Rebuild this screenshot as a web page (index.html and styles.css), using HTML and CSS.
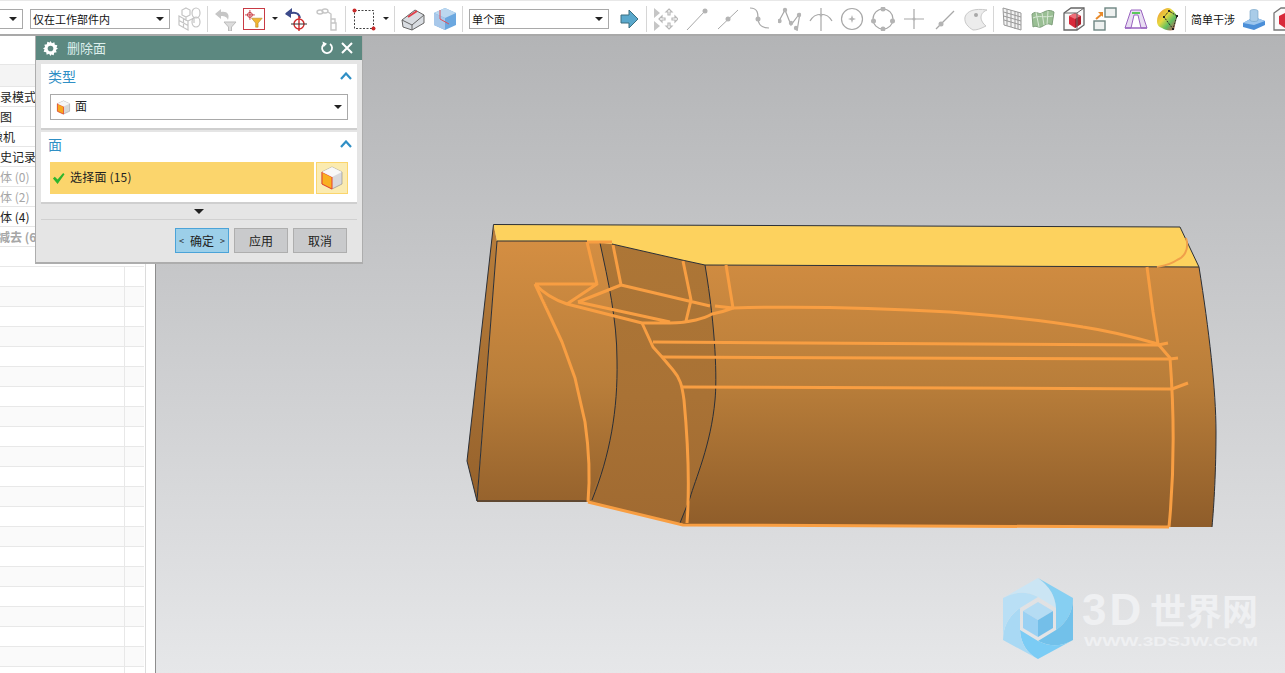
FILE: index.html
```html
<!DOCTYPE html>
<html lang="zh">
<head>
<meta charset="utf-8">
<title>删除面</title>
<link rel="stylesheet" href="styles.css">
</head>
<body>
<div class="app">
  <header class="toolbar">
    <div class="select select-a"><span class="tri"></span></div>
    <div class="select select-b"><span>仅在工作部件内</span><span class="tri"></span></div>
    <svg class="ico m8" viewBox="0 0 24 24"><g fill="none" stroke="#c4c4c4" stroke-width="1.2"><path d="M1 9l9 5v9l-9-5zM10 14l6-3v5M1 13.5l9 5M5.5 11.5v9M8 1l4 2v5l-4 2-4-2V3zM8 10v4"/><ellipse cx="18" cy="6" rx="4" ry="5"/><ellipse cx="18" cy="15" rx="4" ry="5"/></g></svg>
    <i class="sep"></i>
    <svg class="ico" viewBox="0 0 24 24"><path d="M2 7l6-5v3c6-1 9 2 7 8-1-3-3-4-7-4v3z" fill="#c6c6c6"/><path d="M11 15h12l-4.500 5v4h-3v-4z" fill="#dcdcdc" stroke="#bbb"/></svg>
    <div class="boxed m6">
      <svg class="ico-in" viewBox="0 0 22 22"><g fill="none" stroke="#c0202a" stroke-width="1"><circle cx="6" cy="6" r="3"/><path d="M0 6h12M6 0v12"/></g><path d="M8 10h13l-5 6v5h-3v-5z" fill="#f2b632" stroke="#a87a16" stroke-width=".6"/></svg>
    </div>
    <span class="mini-tri m7"></span>
    <svg class="ico m5" viewBox="0 0 24 24"><path d="M2 7l5-4v3c5-1 8 0 9 5" fill="none" stroke="#3c4a8a" stroke-width="2"/><path d="M1 7l6 4V3z" fill="#3c4a8a"/><g fill="none" stroke="#d02a2a" stroke-width="1.4"><circle cx="15" cy="17" r="5"/><path d="M15 9v15"/></g><path d="M7 17h16" stroke="#333"/></svg>
    <svg class="ico m8" viewBox="0 0 24 24"><g fill="none" stroke="#c6c6c6" stroke-width="1.4"><ellipse cx="4" cy="5" rx="3" ry="2"/><ellipse cx="9" cy="4" rx="3" ry="2"/><path d="M12 5l3 2v5h4v4h-4v-4M15 16h5v7h-5z"/></g></svg>
    <i class="sep"></i>
    <svg class="ico m1" viewBox="0 0 24 24"><rect x="2.500" y="3.500" width="19" height="18" fill="none" stroke="#444" stroke-dasharray="2 1.500"/><circle cx="2.500" cy="3.500" r="2" fill="#c82a2a"/><circle cx="21.500" cy="21.500" r="2" fill="#c82a2a"/></svg>
    <span class="mini-tri m7"></span>
    <i class="sep m4"></i>
    <svg class="ico m1" viewBox="0 0 24 24"><path d="M1 13L14 3l9 5v8L11 23l-9-3z" fill="#d9dde2" stroke="#666"/><path d="M1 13l10 5v5M11 18l12-10" fill="none" stroke="#666"/><path d="M7 10l9-6" stroke="#e0404a" stroke-width="2"/></svg>
    <svg class="ico m8" viewBox="0 0 24 24"><path d="M12 1l11 5v12l-11 5-11-5V6z" fill="#6ba8e0"/><path d="M1 6l11 5 11-5-11-5z" fill="#bcd8f0"/><path d="M1 6l11 5v12L1 18z" fill="#a8c8ea"/><path d="M7 3v9l9 5" fill="none" stroke="#e0505a"/></svg>
    <i class="sep"></i>
    <div class="select select-c m1"><span>单个面</span><span class="tri"></span></div>
    <svg class="ico m8" viewBox="0 0 24 24"><path d="M4 8h8V3l9 9-9 9v-5H4z" fill="#5aa8cc" stroke="#3b6f80"/></svg>
    <i class="sep"></i>
    <div class="group m2">
      <svg class="ico" viewBox="0 0 24 24"><path d="M0 1l6 5-6 5zM0 14l6 5-6 5z" fill="#c6c6c6"/><g fill="none" stroke="#b8b8b8" stroke-width="1.200"><path d="M15 2l3 3h-2v3h-2V5h-2zM15 22l3-3h-2v-3h-2v3h-2zM5 12l3-3v2h3v2H8v2zM24 12l-3-3v2h-3v2h3v2z"/></g></svg>
      <svg class="ico" viewBox="0 0 24 24"><path d="M2 23L20 4" stroke="#a8a8a8" fill="none"/><circle cx="20" cy="4" r="2.500" fill="#b4b4b4"/></svg>
      <svg class="ico" viewBox="0 0 24 24"><path d="M2 22L22 3" stroke="#a8a8a8" fill="none"/><circle cx="12" cy="12" r="2.500" fill="#b4b4b4"/></svg>
      <svg class="ico" viewBox="0 0 24 24"><path d="M3 1c8 0 8 6 8 10 0 8 6 10 11 10" stroke="#a8a8a8" fill="none" stroke-width="1.200"/><circle cx="11" cy="12" r="2.500" fill="#b4b4b4"/></svg>
      <svg class="ico" viewBox="0 0 24 24"><path d="M1 14L7 3l6 15 9-12-3 18" stroke="#a8a8a8" fill="none" stroke-width="1.200"/><g fill="#b4b4b4"><circle cx="7" cy="3" r="2.200"/><circle cx="1.500" cy="14" r="2.200"/><circle cx="13" cy="16" r="2.200"/><circle cx="21" cy="8" r="2.200"/><circle cx="18" cy="21" r="2.200"/></g></svg>
      <svg class="ico" viewBox="0 0 24 24"><path d="M1 14C6 5 18 5 23 14M12 1v23" stroke="#a8a8a8" fill="none" stroke-width="1.200"/><circle cx="12" cy="8" r="1.500" fill="#b4b4b4"/></svg>
      <svg class="ico" viewBox="0 0 24 24"><circle cx="12" cy="12" r="10.500" stroke="#a8a8a8" fill="none" stroke-width="1.200"/><path d="M12 8l1 3 3 1-3 1-1 3-1-3-3-1 3-1z" fill="#b4b4b4"/></svg>
      <svg class="ico" viewBox="0 0 24 24"><circle cx="12" cy="12" r="10" stroke="#a8a8a8" fill="none" stroke-width="1.200"/><g fill="#b4b4b4"><circle cx="12" cy="2" r="2.500"/><circle cx="2.500" cy="14" r="2.500"/><circle cx="21.500" cy="14" r="2.500"/><circle cx="12" cy="22" r="2.500"/></g></svg>
      <svg class="ico" viewBox="0 0 24 24"><path d="M2 12h20M12 2v20" stroke="#a8a8a8" fill="none" stroke-width="1.200"/><circle cx="12" cy="12" r="1.500" fill="#b4b4b4"/></svg>
      <svg class="ico" viewBox="0 0 24 24"><path d="M3 22L21 4" stroke="#a8a8a8" fill="none" stroke-width="1.200"/><circle cx="8" cy="17" r="2.500" fill="#b4b4b4"/></svg>
      <svg class="ico" viewBox="0 0 24 24"><path d="M1 10C3 4 10 1 23 3c-5 2-6 5-6 8 0 2 2 6 5 8-6 3-9 4-13 4C4 20 0 16 1 10z" fill="#ececec" stroke="#c8c8c8"/><circle cx="12" cy="8" r="2" fill="#a8a8a8"/></svg>
    </div>
    <i class="sep"></i>
    <div class="group m1">
      <svg class="ico" viewBox="0 0 24 24"><path d="M3 1l18 5v17L4 18z" fill="#f2f2f2" stroke="#999"/><path d="M3.500 5l17.500 5M3.500 9l17.500 5M4 13l17 5M7 2v17M11 3v17M15 4v18M18 5v17" stroke="#999" fill="none"/></svg>
      <svg class="ico" viewBox="0 0 24 24"><path d="M1 7c5-4 6 1 10-1s7-4 12-1l-2 13c-5-3-8 1-11 2s-5-2-8 0z" fill="#9abf94" stroke="#7f9f7c"/><path d="M5 5l3 15M11 6l2 12M17 4l-1 14M2 11c6-3 10 0 20-2" stroke="#d9e8d6" fill="none"/></svg>
      <svg class="ico" viewBox="0 0 24 24"><path d="M2 6l7-5h13v17l-7 5H2z" fill="#fafafa" stroke="#666" stroke-width="1.300"/><path d="M7 9l6-3 6 3v8l-6 4-6-4z" fill="#d8293a"/><path d="M7 9l6 3 6-3-6-3z" fill="#ef6e78"/><path d="M13 12v9l6-4V9z" fill="#a91f2c"/><path d="M2 6h13v17M15 6l7-5" stroke="#666" fill="none"/></svg>
      <svg class="ico" viewBox="0 0 24 24"><rect x="12" y="1" width="11" height="9" fill="#eef1f0" stroke="#6e8582" stroke-width="1.400"/><rect x="1" y="14" width="11" height="9" fill="#eef1f0" stroke="#6e8582" stroke-width="1.400"/><path d="M3 12l6-5" stroke="#e88a2a" stroke-width="2"/><path d="M5 5h5v5z" fill="#e88a2a"/></svg>
      <svg class="ico" viewBox="0 0 24 24"><path d="M1 21L7 3h10l6 18h-6L14 8h-4L7 21z" fill="#e8ddf2" stroke="#9a64c0"/><path d="M8 6h8" stroke="#5ac85a" stroke-width="2"/><path d="M1 21h22" stroke="#9a64c0" stroke-width="1.500"/></svg>
      <svg class="ico" viewBox="0 0 24 24"><defs><linearGradient id="heat" x1="0" y1="0" x2="1" y2="1"><stop offset="0" stop-color="#f08a30"/><stop offset=".4" stop-color="#e8d840"/><stop offset=".65" stop-color="#60c060"/><stop offset="1" stop-color="#d84050"/></linearGradient></defs><path d="M2 14C2 6 9 1 13 1c3 0 6 3 9 8l-3 14c-5 1-9 0-12-2-3-1-5-3-5-7z" fill="url(#heat)"/><path d="M9 10l5-6 8 5-4 13z" fill="none" stroke="#222" stroke-dasharray="2 1"/><g fill="#222"><rect x="8" y="9" width="2" height="2"/><rect x="21" y="8" width="2" height="2"/><rect x="17" y="21" width="2" height="2"/><rect x="13" y="3" width="2" height="2"/></g></svg>
    </div>
    <i class="sep m6"></i>
    <span class="tool-label">简单干涉</span>
    <svg class="ico m7" viewBox="0 0 24 24"><path d="M1 16l11-6 11 4v4l-11 5-11-3z" fill="#4b8fd8"/><path d="M1 16l11-6 11 4-11 4z" fill="#9cc6ee"/><path d="M8 4c0-2 8-2 8 0v9c0 2-8 2-8 0z" fill="#a9cce8" stroke="#6f9fc4" stroke-width=".6"/></svg>
    <svg class="ico m7" viewBox="0 0 24 24"><path d="M1 6l7-5h14v17l-7 5H1z" fill="#fafafa" stroke="#777" stroke-width="1.300"/><path d="M6 9l6-3 6 3v8l-6 4-6-4z" fill="#d8293a"/></svg>
  </header>

  <main class="main">
    <aside class="side">
      <div class="nav-head"></div>
      <ul class="tree">
        <li class="row"><span class="i36">历史记录模式</span></li>
        <li class="row"><span class="i36">模型视图</span></li>
        <li class="row"><span class="i21">摄像机</span></li>
        <li class="row"><span class="i12">历史记录</span></li>
        <li class="row muted"><span class="i12">实体 (0)</span></li>
        <li class="row muted"><span class="i12">片体 (2)</span></li>
        <li class="row"><span class="i12">实体 (4)</span></li>
        <li class="row muted bold"><span class="i14">求减去 (6)</span></li>
      </ul>
      <div class="grid">
        <div class="cell"></div><div class="cell"></div>
        <div class="cell alt"></div><div class="cell alt"></div>
        <div class="cell"></div><div class="cell"></div>
        <div class="cell alt"></div><div class="cell alt"></div>
        <div class="cell"></div><div class="cell"></div>
        <div class="cell alt"></div><div class="cell alt"></div>
        <div class="cell"></div><div class="cell"></div>
        <div class="cell alt"></div><div class="cell alt"></div>
        <div class="cell"></div><div class="cell"></div>
        <div class="cell alt"></div><div class="cell alt"></div>
        <div class="cell"></div><div class="cell"></div>
        <div class="cell alt"></div><div class="cell alt"></div>
        <div class="cell"></div><div class="cell"></div>
        <div class="cell alt"></div><div class="cell alt"></div>
        <div class="cell"></div><div class="cell"></div>
        <div class="cell alt"></div><div class="cell alt"></div>
        <div class="cell"></div><div class="cell"></div>
        <div class="cell alt"></div><div class="cell alt"></div>
        <div class="cell"></div><div class="cell"></div>
        <div class="cell alt"></div><div class="cell alt"></div>
        <div class="cell"></div><div class="cell"></div>
      </div>
    </aside>

    <section class="viewport">
      <svg class="scene" viewBox="156 36 1129 637" preserveAspectRatio="none">
        <defs>
          <linearGradient id="body" gradientUnits="userSpaceOnUse" x1="0" y1="241" x2="0" y2="526"><stop offset="0" stop-color="#d48e42"/><stop offset=".5" stop-color="#b97e3a"/><stop offset="1" stop-color="#8f5d2a"/></linearGradient>
          <linearGradient id="mid" gradientUnits="userSpaceOnUse" x1="0" y1="241" x2="0" y2="526"><stop offset="0" stop-color="#ad7636"/><stop offset=".55" stop-color="#a97235"/><stop offset="1" stop-color="#a06a31"/></linearGradient>
          <linearGradient id="side" gradientUnits="userSpaceOnUse" x1="0" y1="225" x2="0" y2="501"><stop offset="0" stop-color="#b97e3b"/><stop offset="1" stop-color="#96622c"/></linearGradient>
        </defs>
        <path d="M497 241L493.500 224.500 467 461 477 501z" fill="url(#side)"/>
        <path d="M497 241H587L612 244 682 260 705 265 1199 267C1209 330 1216 390 1216 432 1216 470 1214 505 1212 527L1170 527 685 525 588 502H477z" fill="url(#body)"/>
        <path d="M600 243L612 244 682 260 705 265C716 330 717 380 715 400 711 445 695 480 690 498L680 523 588 502C610 455 618 410 617 360 617 320 608 280 600 243z" fill="url(#mid)"/>
        <path d="M493.500 224.500L1180 227 1199 267 705 265 682 260 612 244 587 241H497z" fill="#fdd25e"/>
        <g class="edge">
          <path d="M493.500 224.500L1180 227 1199 267C1209 330 1216 390 1216 432 1216 470 1214 505 1212 527"/>
          <path d="M493.500 224.500L467 461 477 501 497 241 587 241M477 501H588"/>
          <path d="M600 243C608 280 617 320 617 360 618 410 610 455 592 500"/>
          <path d="M705 265C716 330 717 380 715 400 711 445 695 480 690 498L680 523"/>
          <path d="M612 244L682 260 705 265 1199 267"/>
          <path d="M542 297L562 342 575 378 585 422"/>
        </g>
        <g class="feature">
          <path d="M587 242H612M587 242L597 284M613 245L621 285M535 284H597L567 304M535 284C545 295 555 300 567 304L642 323M578 302L621 285 710 306M578 302L670 322M683 261L691 300 686 321M642 323H670C690 323 705 318 712 314 722 312 728 310 733 308L715 306M726 265L733 308"/>
          <path d="M733 308C800 306 880 308 950 312 1003 316 1043 320 1083 327 1110 331 1137 338 1158 344"/>
          <path d="M642 323L653 347 662 357 673 370C680 378 682 385 684 400 687 432 690 482 687 523"/>
          <path d="M653 342L1158 345 1168 343M662 357L1170 359 1178 358M682 387L1172 389 1188 383"/>
          <path d="M1147 267L1153 312 1158 344 1170 358C1174 410 1175 465 1169 527"/>
          <path d="M588 502L683 525 1169 527"/>
          <path d="M535 284L562 342 575 378 585 422C589 450 590 480 588 502"/>
          <path class="thin" d="M1186 238C1190 250 1183 258 1177 260 1170 265 1162 266 1157 267"/>
        </g>
        <g class="logo">
          <path d="M1003 598L1038 578Q1055 590 1056 608L1038 597Q1021 588 1003 598z" fill="#cbe5f4"/>
          <path d="M1038 578L1073 598Q1073 618 1056 630L1056 608Q1055 590 1038 578z" fill="#86cff2"/>
          <path d="M1073 598L1073 640Q1056 650 1038 641L1056 630Q1073 618 1073 598z" fill="#72c1ea"/>
          <path d="M1073 640L1038 659Q1021 650 1020 630L1038 641Q1056 650 1073 640z" fill="#7bccf5"/>
          <path d="M1038 659L1003 640Q1003 620 1020 608L1020 630Q1021 650 1038 659z" fill="#a9d9f4"/>
          <path d="M1003 640L1003 598Q1021 588 1038 597L1020 608Q1003 620 1003 640z" fill="#b9dff5"/>
          <path class="cube-top" d="M1038 602L1053 611 1038 620 1023 611z"/>
          <path class="cube-left" d="M1023 611L1038 620V637L1023 628z"/>
          <path class="cube-right" d="M1053 611L1038 620V637L1053 628z"/>
          <text class="logo-big" y="625"><tspan class="logo-latin" x="1082">3D</tspan><tspan x="1150">世界网</tspan></text>
          <text class="logo-url" x="1084" y="646" textLength="174" lengthAdjust="spacingAndGlyphs">WWW.3DSJW.COM</text>
        </g>
      </svg>
    </section>

    <div class="dialog">
      <div class="dlg-head">
        <svg class="gear" viewBox="0 0 16 16"><path d="M8 0l1.500 2.300 2.600-.9.500 2.700 2.700.5-.9 2.600L16 8l-2.300 1.500.9 2.600-2.700.5-.5 2.700-2.600-.9L8 16l-1.500-2.300-2.600.9-.5-2.700-2.700-.5.9-2.600L0 8l2.300-1.500-.9-2.600 2.700-.5.5-2.700 2.600.9z" fill="#fff"/><circle cx="8" cy="8" r="3" fill="#5c8880"/></svg>
        <span class="dlg-title">删除面</span>
        <svg class="hbtn" viewBox="0 0 14 14"><path d="M5 2.500A5 5 0 1 0 10 3" fill="none" stroke="#fff" stroke-width="1.800"/><path d="M3 0l4 3-4 3z" fill="#fff" transform="rotate(-10 5 3)"/></svg>
        <svg class="hbtn" viewBox="0 0 14 14"><path d="M2 2l10 10M12 2L2 12" stroke="#fff" stroke-width="2"/></svg>
      </div>
      <section class="group-box g1">
        <div class="g-title"><span>类型</span><svg class="chev" viewBox="0 0 12 8"><path d="M1 7l5-5.500L11 7" fill="none" stroke="#2f8fc5" stroke-width="2.200"/></svg></div>
        <div class="dlg-select">
          <svg class="cube" viewBox="0 0 16 16"><path d="M8 1l6.500 3v8L8 15l-6.500-3V4z" fill="#d8d8d8" stroke="#999" stroke-width=".6"/><path d="M1.500 4L8 7v8l-6.500-3z" fill="#f7a81e" stroke="#e8402a" stroke-width=".8"/><path d="M1.500 4L8 1l6.500 3L8 7z" fill="#f6f6f6"/></svg>
          <span class="sel-text">面</span>
          <span class="tri"></span>
        </div>
      </section>
      <section class="group-box g2">
        <div class="g-title"><span>面</span><svg class="chev" viewBox="0 0 12 8"><path d="M1 7l5-5.500L11 7" fill="none" stroke="#2f8fc5" stroke-width="2.200"/></svg></div>
        <div class="pick-row">
          <div class="pick">
            <svg class="check" viewBox="0 0 14 14"><path d="M1 7l2-2 3 3 6-7 1.500 1.500L6 13z" fill="#2db52d"/></svg>
            <span class="pick-text">选择面 (15)</span>
          </div>
          <div class="pick-btn">
            <svg class="cube-lg" viewBox="0 0 22 24"><path d="M11 1l10 5v12l-10 5-10-5V6z" fill="#d9d9dc" stroke="#888" stroke-width=".6"/><path d="M1 6l10 5v12L1 18z" fill="#f9b020" stroke="#e8402a"/><path d="M1 6l10-5 10 5-10 5z" fill="#f8f8f8"/></svg>
          </div>
        </div>
      </section>
      <div class="more"><span class="tri"></span></div>
      <div class="actions">
        <button class="btn primary"><span class="lt">&lt;</span>确定<span class="lt">&gt;</span></button>
        <button class="btn">应用</button>
        <button class="btn">取消</button>
      </div>
    </div>
  </main>
</div>
</body>
</html>
```
FILE: styles.css
```css
* { box-sizing: border-box; }
html, body { margin: 0; height: 100%; overflow: hidden; }
body { font-family: "Noto Sans CJK SC", "Liberation Sans", sans-serif; font-size: 12px; color: #222; background: #fff; }
.app { display: flex; flex-direction: column; height: 673px; width: 1285px; overflow: hidden; }

.toolbar { flex: none; height: 36px; padding: 3px 0 1px; display: flex; align-items: center; background: #fff; border-top: 1px solid #e8e8e8; border-bottom: 2px solid #a9a9a9; overflow: hidden; white-space: nowrap; }
.group { display: flex; gap: 7px; flex: none; }
.ico { width: 24px; height: 24px; flex: none; display: block; }
.sep { flex: none; width: 1px; height: 26px; margin: 0 5px; background: #d6d6d6; }
.toolbar .m1 { margin-left: 1px; }
.toolbar .m2 { margin-left: 2px; }
.toolbar .m4 { margin-left: 4px; }
.toolbar .m5 { margin-left: 5px; }
.toolbar .m6 { margin-left: 6px; }
.toolbar .m7 { margin-left: 7px; }
.toolbar .m8 { margin-left: 8px; }
.select { flex: none; height: 20px; border: 1px solid #a9a9a9; background: #fff; display: flex; align-items: center; justify-content: space-between; padding: 0 5px 0 2px; font-size: 11px; color: #111; }
.select-a { width: 33px; margin-left: -10px; justify-content: flex-end; }
.select-b { width: 140px; margin-left: 7px; }
.select-c { width: 140px; }
.tri { display: inline-block; width: 0; height: 0; border-style: solid; border-width: 4px 4px 0; border-color: #222 transparent transparent; }
.mini-tri { flex: none; width: 0; height: 0; margin-right: 1px; border-style: solid; border-width: 3px 3px 0; border-color: #222 transparent transparent; }
.boxed { flex: none; width: 22px; height: 22px; border: 1px solid #c83a44; padding: 1px; }
.ico-in { width: 18px; height: 18px; display: block; }
.tool-label { flex: none; font-size: 11px; color: #111; width: 44px; }

.main { flex: 1; display: flex; position: relative; min-height: 0; }
.side { flex: none; width: 156px; padding-right: 10px; border-right: 1px solid #8d8d8d; position: relative; background: #fff; display: flex; flex-direction: column; overflow: hidden; }
.side::after { content: ""; position: absolute; top: 0; bottom: 0; left: 145px; width: 1px; background: #dcdcdc; }
.nav-head { flex: none; height: 22px; margin-top: 28px; background: #f4f4f4; border-top: 1px solid #e6e6e6; }
.tree { flex: none; list-style: none; margin: 0; padding: 0; height: 180px; }
.row { height: 20px; line-height: 19px; border-top: 1px solid #e6e6e6; white-space: nowrap; overflow: hidden; font-size: 12px; color: #222; }
.row:last-child { height: 21px; border-bottom: 1px solid #e6e6e6; }
.row.muted { color: #a6a6a6; }
.row.bold { font-weight: 700; }
.row span { display: inline-block; }
.i36 { margin-left: -36px; }
.i21 { margin-left: -21px; }
.i14 { margin-left: -14px; }
.i12 { margin-left: -12px; }
.grid { flex: 1; display: grid; grid-template-columns: 124px 20px; grid-auto-rows: 20px; width: 144px; }
.cell { border-top: 1px solid #e8e8e8; background: #fff; }
.cell:nth-child(even) { border-left: 1px solid #e8e8e8; }
.cell.alt { background: #fafafa; }

.viewport { flex: 1; min-width: 0; background: linear-gradient(180deg, #b3b4b6 0%, #e6e7e9 100%); }
.scene { display: block; width: 100%; height: 100%; }
.edge path { fill: none; stroke: #2b2f36; stroke-width: 1; }
.feature path { fill: none; stroke: #f89e42; stroke-width: 3; stroke-linejoin: round; }
.feature .thin { stroke-width: 2; stroke: #f0a04a; }
.cube-top { fill: #b5dcf3; }
.cube-left { fill: #9ad1f3; }
.cube-right { fill: #74bfe9; }
.logo-big { font-family: "Noto Sans CJK SC", "Liberation Sans", sans-serif; font-weight: 700; font-size: 36px; fill: #eff0f2; }
.logo-latin { font-family: "Liberation Sans", sans-serif; font-size: 44px; letter-spacing: 3px; }
.logo-url { font-family: "Liberation Sans", sans-serif; font-weight: 700; font-size: 12px; fill: #eff0f2; }

.dialog { position: absolute; left: 35px; top: 0; width: 328px; height: 228px; background: #e5e5e5; border: 1px solid #adadad; border-width: 0 1px 2px 1px; display: flex; flex-direction: column; padding: 0 5px; }
.dlg-head { flex: none; height: 24px; margin: 0 -5px; padding: 0 8px 0 7px; background: #5c8880; display: flex; align-items: center; color: #dcefec; font-size: 13px; }
.gear { width: 15px; height: 15px; flex: none; }
.dlg-title { flex: 1; margin-left: 9px; line-height: 24px; }
.hbtn { width: 14px; height: 14px; flex: none; margin-left: 6px; }
.group-box { flex: none; background: #fff; border-bottom: 2px solid #cfcfcf; padding: 0 9px; }
.g1 { margin-top: 4px; height: 66px; }
.g2 { margin-top: 2px; height: 72px; }
.g-title { height: 26px; margin: 0 -4px 4px -2px; padding-bottom: 2px; display: flex; align-items: center; justify-content: space-between; color: #2f8fc5; font-size: 14px; line-height: 24px; }
.chev { width: 12px; height: 8px; flex: none; }
.dlg-select { height: 26px; border: 1px solid #a9a9a9; display: flex; align-items: center; padding: 0 5px; font-size: 12px; }
.cube { width: 15px; height: 15px; flex: none; }
.sel-text { flex: 1; margin-left: 4px; padding-bottom: 3px; }
.pick-row { display: flex; gap: 2px; height: 32px; }
.pick { flex: 1; background: #fbd56c; display: flex; align-items: center; padding-left: 2px; gap: 5px; font-size: 12px; letter-spacing: .2px; }
.pick-text { padding-bottom: 3px; }
.check { width: 13px; height: 13px; flex: none; }
.pick-btn { flex: none; width: 32px; background: #fbebb0; border: 1px solid #fbd56c; display: flex; align-items: center; justify-content: center; }
.cube-lg { width: 22px; height: 24px; }
.more { flex: none; height: 16px; display: flex; align-items: center; justify-content: center; border-bottom: 1px solid #d0d0d0; }
.more .tri { border-width: 5px 5px 0; }
.actions { flex: none; display: flex; justify-content: flex-end; gap: 5px; padding: 8px 10px 0 0; }
.btn { width: 54px; height: 25px; padding: 0; background: #c9cacc; border: 1px solid #aeaeae; color: #222; font: 12px "Noto Sans CJK SC", sans-serif; }
.primary { background: #9ccfe9; border-color: #4ba3d8; display: flex; align-items: center; justify-content: space-between; padding: 0 3px; }
.lt { font-size: 9px; }
```
